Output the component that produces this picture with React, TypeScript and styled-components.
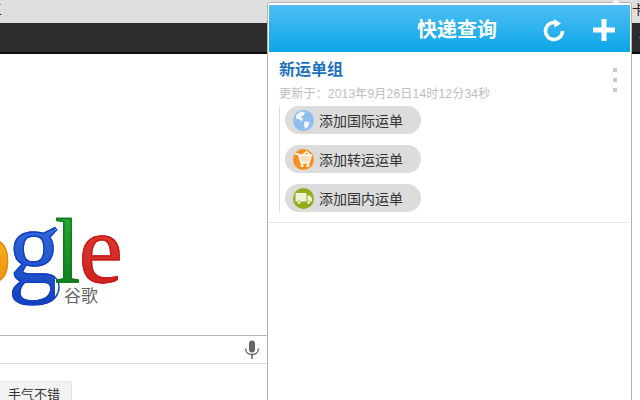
import styled, { createGlobalStyle } from "styled-components";

const GlobalStyle = createGlobalStyle`
  html, body {
    margin: 0;
    padding: 0;
    width: 640px;
    height: 400px;
    overflow: hidden;
    background: #fff;
    font-family: "Liberation Sans", "Noto Sans CJK SC", sans-serif;
  }
`;

const cjk = `"Liberation Sans", "Noto Sans CJK SC", sans-serif`;

/* ── Browser page behind the popup ── */
const Page = styled.div`
  position: relative;
  width: 640px;
  height: 400px;
  overflow: hidden;
  display: flex;
  flex-direction: column;
`;

const BrowserBar = styled.div`
  height: 23px;
  flex: none;
  background: #dfdfdf;
  display: flex;
  justify-content: space-between;
  font-size: 13px;
  line-height: 20px;
  color: #222;
  overflow: hidden;
`;

const BarGlyphLeft = styled.span`
  margin-left: -11px;
`;

const BarGlyphRight = styled.span`
  margin-right: -5px;
`;

const NavBar = styled.div`
  height: 29px;
  flex: none;
  background: #2d2d2d;
  border-bottom: 2px solid #0c0c0c;
  display: flex;
  justify-content: flex-end;
  align-items: center;
  color: #ddd;
  font-size: 12px;
  overflow: hidden;
`;

const NavGlyph = styled.span`
  margin-right: -6px;
`;

const Main = styled.main`
  flex: 1;
  display: flex;
  flex-direction: column;
  padding-top: 145px;
`;

const Logo = styled.div`
  margin-left: -138px;
  height: 95px;
  font-family: "Liberation Serif", serif;
  line-height: 95px;
  white-space: nowrap;
`;

const LogoLetter = styled.span<{ $from: string; $to: string; $size?: number; $gap?: number }>`
  font-size: ${(p) => p.$size ?? 90}px;
  letter-spacing: ${(p) => p.$gap ?? -3}px;
  background: linear-gradient(180deg, ${(p) => p.$from}, ${(p) => p.$to});
  -webkit-background-clip: text;
  background-clip: text;
  color: transparent;
  -webkit-text-stroke: 1.4px ${(p) => p.$to};
`;

const LogoSub = styled.div`
  margin: -8px 0 0 64px;
  height: 22px;
  font-size: 17px;
  line-height: 22px;
  color: #666;
`;

const SearchBox = styled.div`
  margin-top: 27px;
  width: 267px;
  height: 29px;
  flex: none;
  box-sizing: border-box;
  border-top: 1px solid #b9b9b9;
  border-bottom: 1px solid #d9d9d9;
  display: flex;
  align-items: center;
  justify-content: flex-end;
  padding-right: 7px;
`;

const LuckyButton = styled.div`
  margin: 17px 0 0 -10px;
  width: 82px;
  height: 30px;
  box-sizing: border-box;
  background: #f3f3f3;
  border: 1px solid #e4e4e4;
  border-radius: 2px;
  text-align: center;
  font-size: 13px;
  line-height: 26px;
  padding-left: 6px;
  color: #333;
`;

/* ── Extension popup ── */
const Popup = styled.div`
  position: absolute;
  left: 267px;
  top: 2px;
  width: 365px;
  height: 420px;
  box-sizing: border-box;
  background: #fff;
  border: 1px solid #b4b4b4;
  border-radius: 3px 3px 0 0;
  padding: 2px 1px 0 1px;
  font-family: ${cjk};
`;

const PopupArrow = styled.span`
  position: absolute;
  right: 10px;
  top: -3px;
  width: 0;
  height: 0;
  border-left: 5px solid transparent;
  border-right: 5px solid transparent;
  border-bottom: 4px solid #fff;
`;

const Header = styled.header`
  height: 47px;
  box-sizing: border-box;
  padding-top: 2px;
  background: linear-gradient(180deg, #4fbef3 0%, #0ba6e9 100%);
  display: flex;
  align-items: center;
  color: #fff;
`;

const Title = styled.h1`
  margin: 2px 0 0 148px;
  width: 80px;
  font-size: 20px;
  font-weight: 700;
  line-height: 45px;
  white-space: nowrap;
`;

const HeaderIcon = styled.svg`
  display: block;
`;

const RefreshIcon = styled(HeaderIcon)`
  margin-left: 46px;
`;

const PlusIcon = styled(HeaderIcon)`
  margin-left: 27px;
`;

const Group = styled.section`
  position: relative;
  padding: 8px 10px 10px 10px;
  border-bottom: 1px solid #e6e6e6;
`;

const GroupTitle = styled.h2`
  margin: 0;
  font-size: 16px;
  font-weight: 700;
  line-height: 20px;
  color: #1b72bd;
`;

const Updated = styled.div`
  margin-top: 6px;
  font-size: 12px;
  line-height: 16px;
  letter-spacing: 0.2px;
  color: #bdbdbd;
  white-space: nowrap;
`;

const AddList = styled.div`
  margin-top: 4px;
  border-left: 1px solid #dedede;
  padding-left: 5px;
  display: flex;
  flex-direction: column;
  align-items: flex-start;
  gap: 11px;
`;

const AddPill = styled.div`
  width: 136px;
  height: 28px;
  box-sizing: border-box;
  border-radius: 14px;
  background: #dcdcdc;
  padding-left: 8px;
  display: flex;
  align-items: center;
  gap: 5px;
  font-size: 14px;
  color: #333;
  white-space: nowrap;
`;

const Dots = styled.div`
  position: absolute;
  right: 13px;
  top: 16px;
  display: flex;
  flex-direction: column;
  gap: 6px;
`;

const Dot = styled.span`
  width: 4px;
  height: 4px;
  background: #c9c9c9;
`;

const MicIcon = () => (
  <svg width="16" height="20" viewBox="0 0 16 20">
    <rect x="5" y="0.5" width="6" height="12" rx="3" fill="#666" />
    <path d="M1.5 8.5c0 3.8 3 6 6.5 6s6.5-2.2 6.5-6" fill="none" stroke="#666" strokeWidth="1.4" />
    <rect x="7.2" y="14" width="1.6" height="5" fill="#666" />
  </svg>
);

const GlobeIcon = () => (
  <svg width="21" height="21" viewBox="0 0 21 21">
    <circle cx="10.5" cy="10.5" r="10.5" fill="#8cbfee" />
    <path d="M3 5 8 1.5l4 1-1.5 3-3 1.5 2.5 1.5-1 3-2.5-2L3 8.500z" fill="#f4f8fc" />
    <path d="M11.5 11.5l5 .5-1.5 5-3 2-1-4z" fill="#f4f8fc" />
  </svg>
);

const CartIcon = () => (
  <svg width="21" height="21" viewBox="0 0 21 21">
    <circle cx="10.5" cy="10.5" r="10.5" fill="#f8901e" />
    <path d="M2 5h3.5l2.5 9h8l2.500-8H6" fill="#ffe0bd" stroke="#fff" strokeWidth="1.3" strokeLinejoin="round" />
    <path d="M10 6l3.5-3.500L17 6" fill="none" stroke="#fff" strokeWidth="1.3" />
    <circle cx="9" cy="16.5" r="1.6" fill="#fff" />
    <circle cx="15" cy="16.5" r="1.6" fill="#fff" />
  </svg>
);

const TruckIcon = () => (
  <svg width="21" height="21" viewBox="0 0 21 21">
    <circle cx="10.5" cy="10.5" r="10.5" fill="#93ad1d" />
    <rect x="2.5" y="5" width="11" height="8.5" fill="#eef3d8" />
    <path d="M14.5 7.5h2.500l2 3v3h-4.500z" fill="#eef3d8" />
    <circle cx="6" cy="14.5" r="1.6" fill="#fff" stroke="#93ad1d" strokeWidth=".6" />
    <circle cx="15.5" cy="14.5" r="1.6" fill="#fff" stroke="#93ad1d" strokeWidth=".6" />
  </svg>
);

const addItems = [
  { label: "添加国际运单", icon: <GlobeIcon /> },
  { label: "添加转运运单", icon: <CartIcon /> },
  { label: "添加国内运单", icon: <TruckIcon /> },
];

export default function App() {
  return (
    <Page>
      <GlobalStyle />
      <BrowserBar>
        <BarGlyphLeft>三</BarGlyphLeft>
        <BarGlyphRight>卡</BarGlyphRight>
      </BrowserBar>
      <NavBar>
        <NavGlyph>+</NavGlyph>
      </NavBar>
      <Main>
        <Logo>
          <LogoLetter $from="#4f86e8" $to="#1a48b8">G</LogoLetter>
          <LogoLetter $from="#e8503c" $to="#b81a10">o</LogoLetter>
          <LogoLetter $from="#fbc430" $to="#e88a08">o</LogoLetter>
          <LogoLetter $from="#3f7fe8" $to="#1440c0" $size={106} $gap={-6}>g</LogoLetter>
          <LogoLetter $from="#2cae38" $to="#0a7a18" $gap={-1}>l</LogoLetter>
          <LogoLetter $from="#e8483c" $to="#c81a18" $size={98}>e</LogoLetter>
        </Logo>
        <LogoSub>谷歌</LogoSub>
        <SearchBox>
          <MicIcon />
        </SearchBox>
        <LuckyButton>手气不错</LuckyButton>
      </Main>
      <Popup>
        <PopupArrow />
        <Header>
          <Title>快递查询</Title>
          <RefreshIcon width="22" height="24" viewBox="0 0 22 24">
            <path d="M15 5.5A8.5 8.5 0 1 0 19.5 13" fill="none" stroke="#fff" strokeWidth="3.6" />
            <path d="M11 1l7 4.5-6.5 4z" fill="#fff" />
          </RefreshIcon>
          <PlusIcon width="24" height="24" viewBox="0 0 24 24">
            <path d="M9.5 1h5v8.5H23v5h-8.5V23h-5v-8.500H1v-5h8.500z" fill="#fff" />
          </PlusIcon>
        </Header>
        <Group>
          <GroupTitle>新运单组</GroupTitle>
          <Updated>更新于：2013年9月26日14时12分34秒</Updated>
          <AddList>
            {addItems.map((item) => (
              <AddPill key={item.label}>
                {item.icon}
                {item.label}
              </AddPill>
            ))}
          </AddList>
          <Dots>
            <Dot />
            <Dot />
            <Dot />
          </Dots>
        </Group>
      </Popup>
    </Page>
  );
}
